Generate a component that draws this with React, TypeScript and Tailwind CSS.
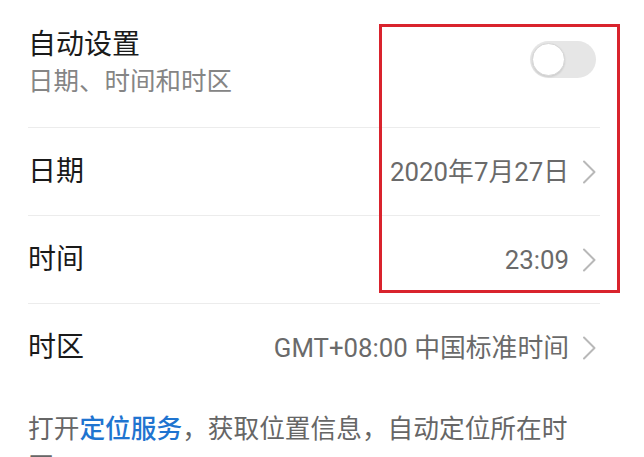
import React from 'react'

const Chevron = () => (
    <svg width="14" height="24" viewBox="0 0 14 24" fill="none" className="shrink-0">
        <polyline points="2,1.5 12.5,12 2,22.5" stroke="#b8b8b8" strokeWidth="2" strokeLinecap="round" strokeLinejoin="round" />
    </svg>
)

const Row = ({ label, value, last }: { label: string; value: string; last?: boolean }) => (
    <div className={`flex h-[88px] items-center justify-between pr-[4px] ${last ? "" : "border-b border-[#ececec]"}`}>
        <span className="text-[28px] leading-[36px] text-[#1a1a1a]">{label}</span>
        <div className="flex items-center gap-[13px]">
            <span className="text-[25.8px] leading-[36px] text-[#6a6a6a]">{value}</span>
            <Chevron />
        </div>
    </div>
)

export default function App() {
    return (
        <div className="relative h-[457px] w-[644px] overflow-hidden bg-white font-['Roboto','Noto_Sans_CJK_SC',sans-serif]">
            <div className="ml-[28px] w-[572px]">
                {/* auto setting */}
                <div className="flex h-[128px] justify-between border-b border-[#ececec] pr-[4px] pt-[27px]">
                    <div className="flex flex-col">
                        <span className="text-[28px] leading-[36px] text-[#1a1a1a]">自动设置</span>
                        <span className="text-[25.5px] leading-[36px] text-[#858585]">日期、时间和时区</span>
                    </div>
                    <div className="mt-[14px] flex h-[37px] w-[66px] items-center rounded-full bg-[#e6e6e6] pl-[2px]">
                        <div className="h-[33px] w-[33px] rounded-full border border-[#d6d6d6] bg-white shadow-[0_1px_2px_rgba(0,0,0,0.12)]" />
                    </div>
                </div>

                <Row label="日期" value="2020年7月27日" />
                <Row label="时间" value="23:09" />
                <Row label="时区" value="GMT+08:00 中国标准时间" last />

                <p className="w-[548px] pt-[18px] text-[25.7px] leading-[38px] text-[#666666]">
                    打开<span className="font-medium text-[#1f74d0]">定位服务</span>，获取位置信息，自动定位所在时区。
                </p>
            </div>

            {/* annotation frame */}
            <div className="absolute left-[379px] top-[24px] h-[269px] w-[241px] border-[3px] border-[#d9232d]" />
        </div>
    )
}
